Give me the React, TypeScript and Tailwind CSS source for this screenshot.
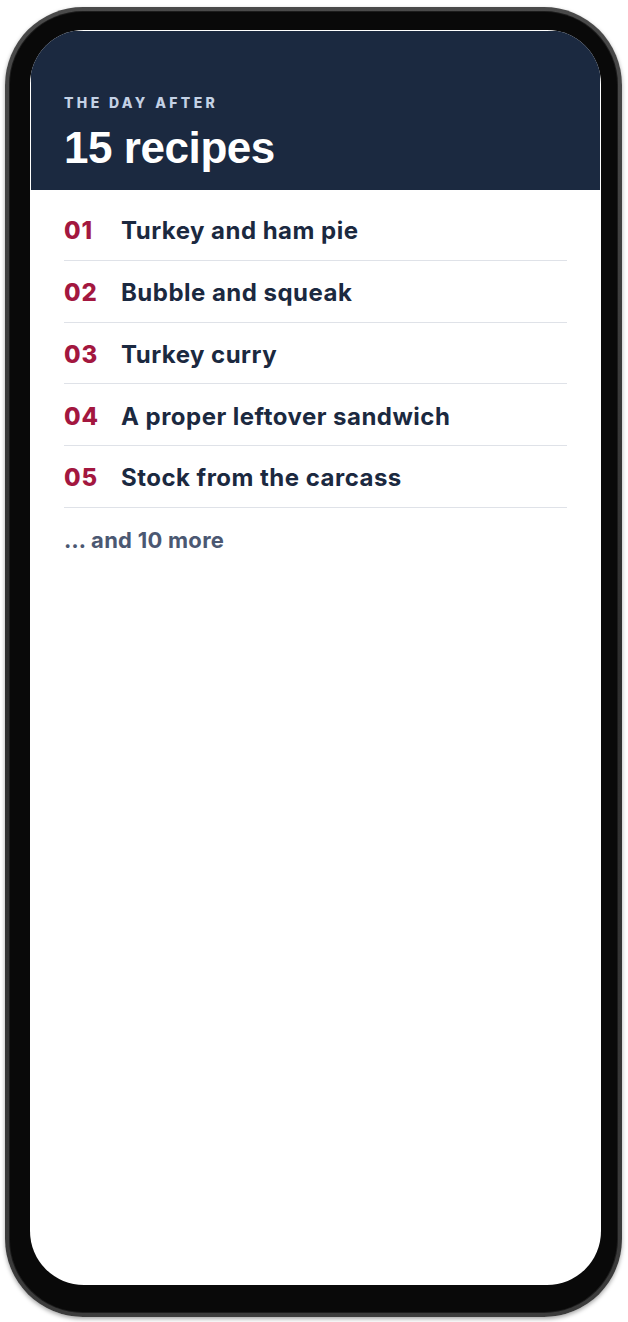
import React from 'react'

const RECIPES = [
  'Turkey and ham pie',
  'Bubble and squeak',
  'Turkey curry',
  'A proper leftover sandwich',
  'Stock from the carcass',
]

const BODY_FONT = "font-['Inter','Noto_Sans',sans-serif]"

export default function App() {
  return (
    <div className="w-[628px] h-[1322px] bg-white pl-[5px] pt-[7px]">
      {/* Phone frame */}
      <div className="w-[617px] h-[1310px] rounded-[78px] bg-gradient-to-b from-[#4a4a4a] via-[#2e2e2e] to-[#3c3c3c] p-[5px] shadow-[0_2px_4px_rgba(0,0,0,0.35)]">
        <div className="w-full h-full rounded-[73px] bg-[#090909] pt-[18px] pl-[20px] pr-[16px] pb-[27px] ring-1 ring-[#1c1c1c]">
          {/* Screen */}
          <div className="w-full h-full rounded-[54px] bg-white overflow-hidden">
            <div className="mx-[1px] mt-[1px] h-[159px] bg-[#1b2940] pl-[33px] pt-[62px]">
              <div
                className={`${BODY_FONT} text-[14px] leading-[20px] font-extrabold tracking-[0.24em] text-[#c4d1e5]`}
              >
                THE DAY AFTER
              </div>
              <h1 className="mt-[13px] font-['Liberation_Sans',Arial,sans-serif] text-[44px] leading-[43px] font-bold tracking-[-0.01em] text-white">
                15 recipes
              </h1>
            </div>

            <ul className={`${BODY_FONT} px-[34px] pt-[9px]`}>
              {RECIPES.map((title, i) => (
                <li
                  key={title}
                  className="h-[61.75px] pt-[4px] flex items-center border-b border-[#dfe2e8]"
                >
                  <span className="w-[57px] text-[24px] font-extrabold tracking-[0.04em] text-[#a3173f]">
                    {String(i + 1).padStart(2, '0')}
                  </span>
                  <span className="text-[24px] font-bold text-[#1b2940] tracking-[0.02em]">
                    {title}
                  </span>
                </li>
              ))}
            </ul>
            <div
              className={`${BODY_FONT} px-[34px] pt-[18px] text-[22px] leading-[28px] font-bold tracking-[0.012em] text-[#4b5872]`}
            >
              … and 10 more
            </div>
          </div>
        </div>
      </div>
    </div>
  )
}
